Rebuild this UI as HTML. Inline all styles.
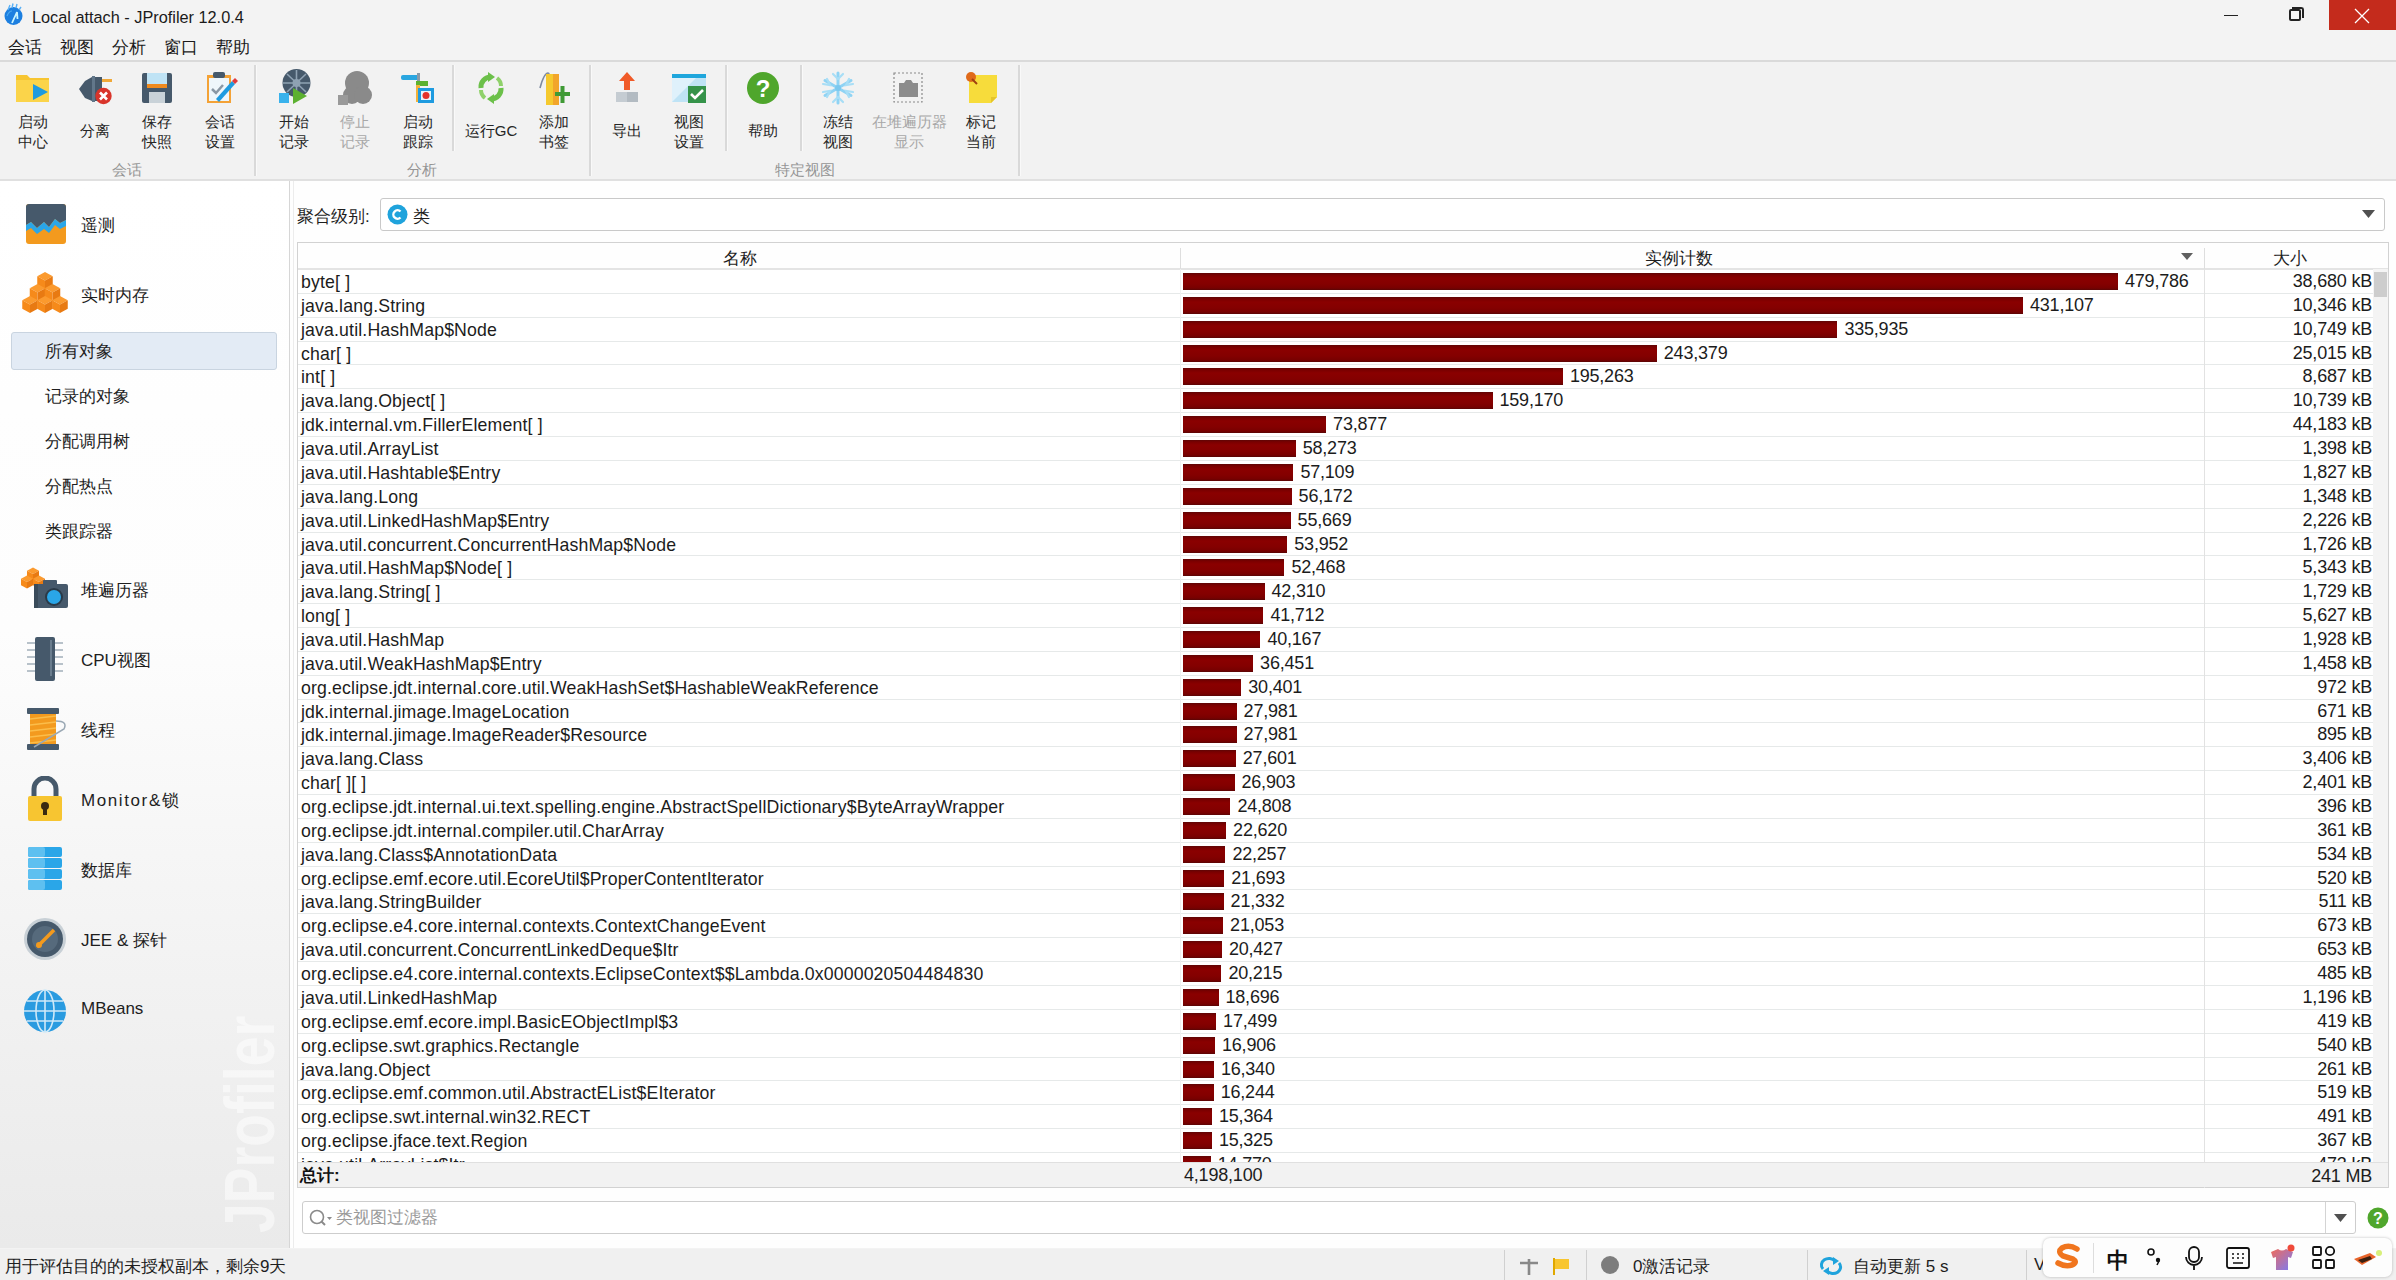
<!DOCTYPE html><html><head><meta charset='utf-8'><style>
*{margin:0;padding:0;box-sizing:border-box}
html,body{width:2396px;height:1280px;overflow:hidden;background:#f3f3f3}
body{position:relative;font-family:"Liberation Sans",sans-serif;color:#1a1a1a}
.a{position:absolute;white-space:nowrap}
.tb{font-size:15px;line-height:19.5px;text-align:center;color:#262626}
.tbd{color:#a8a8a8}
.glab{font-size:15px;color:#959595;text-align:center}
.si{font-size:17px;color:#1e1e1e}
.row{position:absolute;left:298px;width:2075px;height:24px;border-bottom:1px solid #e6e6e6}
.nm{position:absolute;left:3px;top:3px;font-size:17.7px;letter-spacing:0.15px;color:#1c1c1c}
.bar{position:absolute;height:17px;background:linear-gradient(#5e0606 0,#7a0000 2px,#8a0000 5px,#840000 11px,#780000 15px,#5a0505 17px)}
.cnt{position:absolute;font-size:18px;letter-spacing:-0.2px;color:#1c1c1c}
.sz{position:absolute;font-size:18px;letter-spacing:-0.2px;color:#1c1c1c;text-align:right}
</style></head><body>
<div class="a" style="left:0;top:0;width:2396px;height:30px;background:#f3f3f3"></div>
<svg class="a" style="left:2px;top:3px" width="24" height="26" viewBox="0 0 24 26"><circle cx="11.5" cy="13" r="9" fill="#1c7fe0"/><path d="M6 7 L8 2 M10 5 L11 0.5 M14 5 L15 1 M17 7 L19 4" stroke="#5ab0f5" stroke-width="1.4"/><path d="M10 20 L15 9 L15.5 16" stroke="#c8f4ff" stroke-width="1.8" fill="none"/><path d="M5 13 Q7 8 10 8" stroke="#4aa8f0" stroke-width="1.2" fill="none"/></svg>
<div class="a" style="left:32px;top:8px;font-size:16.3px;color:#1a1a1a">Local attach - JProfiler 12.0.4</div>
<div class="a" style="left:2224px;top:15px;width:14px;height:1px;background:#222"></div>
<div class="a" style="left:2289px;top:9px;width:12px;height:12px;border:2px solid #222;border-radius:2px"></div>
<div class="a" style="left:2292px;top:7px;width:12px;height:11px;border-top:2px solid #222;border-right:2px solid #222;border-radius:0 3px 0 0"></div>
<div class="a" style="left:2329px;top:0;width:67px;height:30px;background:#c42b1c"></div>
<svg class="a" style="left:2354px;top:8px" width="16" height="16" viewBox="0 0 16 16"><path d="M1 1 L15 15 M15 1 L1 15" stroke="#fff" stroke-width="1.3"/></svg>

<div class="a" style="left:8px;top:36px;font-size:17px;color:#1a1a1a">会话</div>
<div class="a" style="left:60px;top:36px;font-size:17px;color:#1a1a1a">视图</div>
<div class="a" style="left:112px;top:36px;font-size:17px;color:#1a1a1a">分析</div>
<div class="a" style="left:164px;top:36px;font-size:17px;color:#1a1a1a">窗口</div>
<div class="a" style="left:216px;top:36px;font-size:17px;color:#1a1a1a">帮助</div>
<div class="a" style="left:0;top:60px;width:2396px;height:2px;background:#dadada"></div>
<div class="a" style="left:0;top:62px;width:2396px;height:117px;background:#f2f2f2"></div>
<div class="a" style="left:0;top:179px;width:2396px;height:2px;background:#e0e0e0"></div>
<div class="a" style="left:254px;top:65px;width:2px;height:111px;background:#d9d9d9"></div><div class="a" style="left:256px;top:65px;width:1px;height:111px;background:#f9f9f9"></div>
<div class="a" style="left:452px;top:65px;width:2px;height:86px;background:#d9d9d9"></div><div class="a" style="left:454px;top:65px;width:1px;height:86px;background:#f9f9f9"></div>
<div class="a" style="left:589px;top:65px;width:2px;height:111px;background:#d9d9d9"></div><div class="a" style="left:591px;top:65px;width:1px;height:111px;background:#f9f9f9"></div>
<div class="a" style="left:725px;top:65px;width:2px;height:86px;background:#d9d9d9"></div><div class="a" style="left:727px;top:65px;width:1px;height:86px;background:#f9f9f9"></div>
<div class="a" style="left:800px;top:65px;width:2px;height:86px;background:#d9d9d9"></div><div class="a" style="left:802px;top:65px;width:1px;height:86px;background:#f9f9f9"></div>
<div class="a" style="left:1018px;top:65px;width:2px;height:111px;background:#d9d9d9"></div><div class="a" style="left:1020px;top:65px;width:1px;height:111px;background:#f9f9f9"></div>
<div class="a" style="left:15px;top:71px;width:36px;height:34px"><svg width="36" height="34" viewBox="0 0 36 34"><path d="M1 4 h11 l3 3 h19 v24 h-33z" fill="#f7c531"/><path d="M1 9 h33 v22 h-33z" fill="#fbd44a"/><path d="M18 13 L33 21 L18 29z" fill="#1e9be0"/></svg></div>
<div class="a tb" style="left:-17px;top:112px;width:100px">启动<br>中心</div>
<div class="a" style="left:77px;top:71px;width:36px;height:34px"><svg width="36" height="36" viewBox="0 0 36 36"><path d="M2 18 L8 10 L15 6 h10 v24 h-10 L8 27z" fill="#46596b"/><rect x="15" y="5" width="3" height="26" fill="#62778a"/><rect x="25" y="8" width="10" height="3" fill="#f0a838"/><circle cx="26.5" cy="25" r="8.2" fill="#d9342a"/><path d="M23 21.5 l7 7 M30 21.5 l-7 7" stroke="#fff" stroke-width="2.6"/></svg></div>
<div class="a tb" style="left:45px;top:121px;width:100px">分离</div>
<div class="a" style="left:139px;top:71px;width:36px;height:34px"><svg width="36" height="34" viewBox="0 0 36 34"><rect x="3" y="2" width="30" height="30" rx="2" fill="#46596b"/><rect x="8" y="2" width="20" height="11" fill="#bfe3f5"/><rect x="8" y="13" width="20" height="4" fill="#ef8a1e"/><rect x="10" y="21" width="16" height="11" fill="#c9d2d8"/></svg></div>
<div class="a tb" style="left:107px;top:112px;width:100px">保存<br>快照</div>
<div class="a" style="left:202px;top:71px;width:36px;height:34px"><svg width="36" height="34" viewBox="0 0 36 34"><rect x="5" y="4" width="24" height="28" fill="#f4a236"/><rect x="7" y="7" width="20" height="23" fill="#eef6fb"/><rect x="11" y="1" width="12" height="6" rx="2" fill="#46596b"/><path d="M10 18 l4 4 l7 -8" stroke="#8a98a5" stroke-width="2.5" fill="none"/><path d="M14 28 L30 10 L33 13 L17 31z" fill="#1e9be0"/><path d="M30 10 L33 7 L36 10 L33 13z" fill="#e23b3b"/></svg></div>
<div class="a tb" style="left:170px;top:112px;width:100px">会话<br>设置</div>
<div class="a" style="left:276px;top:71px;width:36px;height:34px"><svg width="36" height="36" viewBox="0 -2 36 36" style="position:absolute;top:-2px;left:0"><circle cx="20.5" cy="12" r="14" fill="#46596b"/><circle cx="20.5" cy="12" r="4" fill="#8fa2b3"/><path d="M20.5 -1 v26 M7 12 h27 M11 3 l19 18 M30 3 l-19 18" stroke="#8fa2b3" stroke-width="1.6"/><rect x="3" y="22" width="10" height="10" fill="#39b2ec"/><path d="M17 17 L31 25 L17 33z" fill="#5cb130"/></svg></div>
<div class="a tb" style="left:244px;top:112px;width:100px">开始<br>记录</div>
<div class="a" style="left:337px;top:71px;width:36px;height:34px"><svg width="36" height="36" viewBox="0 0 36 36"><circle cx="20" cy="12" r="12" fill="#8a8a8a"/><circle cx="15" cy="24" r="9" fill="#8a8a8a"/><circle cx="26" cy="24" r="9" fill="#8a8a8a"/><rect x="1" y="24" width="10" height="10" fill="#9a9a9a"/></svg></div>
<div class="a tb tbd" style="left:305px;top:112px;width:100px">停止<br>记录</div>
<div class="a" style="left:400px;top:71px;width:36px;height:34px"><svg width="36" height="34" viewBox="0 0 36 34"><rect x="1" y="4" width="18" height="5" rx="2" fill="#2aa6e0"/><rect x="17" y="2" width="3" height="10" fill="#8a9aa8"/><rect x="16" y="10" width="12" height="5" fill="#5cb130"/><rect x="16" y="14" width="4" height="17" fill="#f2b23a"/><rect x="18" y="17" width="16" height="15" fill="#1e9be0"/><rect x="21" y="20" width="10" height="9" fill="#e8f4fb"/><circle cx="26" cy="24.5" r="3.5" fill="#e2322a"/></svg></div>
<div class="a tb" style="left:368px;top:112px;width:100px">启动<br>跟踪</div>
<div class="a" style="left:473px;top:71px;width:36px;height:34px"><svg width="36" height="34" viewBox="0 0 36 34"><path d="M8 17 A10 10 0 0 1 18 6" stroke="#6cc04a" stroke-width="5" fill="none"/><path d="M15 1 L22 6 L15 11z" fill="#6cc04a"/><path d="M28 17 A10 10 0 0 1 18 28" stroke="#6cc04a" stroke-width="5" fill="none"/><path d="M21 23 L14 28 L21 33z" fill="#6cc04a"/><path d="M12 27 A10 10 0 0 1 8 19" stroke="#8fd16a" stroke-width="4" fill="none"/><path d="M24 7 A10 10 0 0 1 28 15" stroke="#8fd16a" stroke-width="4" fill="none"/></svg></div>
<div class="a tb" style="left:441px;top:121px;width:100px">运行GC</div>
<div class="a" style="left:536px;top:71px;width:36px;height:34px"><svg width="36" height="36" viewBox="0 0 36 36"><path d="M4 17 Q8 2 12 2 Q14 2 14 10" stroke="#7d8aa0" stroke-width="1.6" fill="none"/><path d="M10 3 h13 v31 h-13z" fill="#f5c92e"/><path d="M17 3 h6 v31 h-6z" fill="#f2a52a"/><rect x="19" y="21" width="15" height="4" fill="#3f9a35"/><rect x="24.5" y="15" width="4" height="17" fill="#3f9a35"/></svg></div>
<div class="a tb" style="left:504px;top:112px;width:100px">添加<br>书签</div>
<div class="a" style="left:609px;top:71px;width:36px;height:34px"><svg width="36" height="34" viewBox="0 0 36 34"><path d="M18 1 L26 10 L21 10 L21 19 L15 19 L15 10 L10 10z" fill="#f05a28"/><rect x="7" y="21" width="22" height="10" fill="#c5ccd2"/><rect x="18" y="21" width="11" height="10" fill="#b3bbc2"/></svg></div>
<div class="a tb" style="left:577px;top:121px;width:100px">导出</div>
<div class="a" style="left:671px;top:71px;width:36px;height:34px"><svg width="36" height="34" viewBox="0 0 36 34"><rect x="1" y="3" width="34" height="28" fill="#dff1fb"/><path d="M1 31 L25 7 L35 7 L35 31z" fill="#bfe3f5"/><rect x="1" y="3" width="34" height="4" fill="#1fa6dc"/><rect x="17" y="15" width="18" height="17" fill="#35934a"/><path d="M20 23 l4 4 l8 -8" stroke="#fff" stroke-width="2.6" fill="none"/></svg></div>
<div class="a tb" style="left:639px;top:112px;width:100px">视图<br>设置</div>
<div class="a" style="left:745px;top:71px;width:36px;height:34px"><svg width="36" height="34" viewBox="0 0 36 34"><circle cx="18" cy="17" r="16" fill="#4fa62c"/><text x="18" y="26" text-anchor="middle" font-family="Liberation Sans" font-weight="bold" font-size="24" fill="#fff">?</text></svg></div>
<div class="a tb" style="left:713px;top:121px;width:100px">帮助</div>
<div class="a" style="left:820px;top:71px;width:36px;height:34px"><svg width="36" height="34" viewBox="0 0 36 34"><g stroke="#8fd3f4" stroke-width="3" stroke-linecap="round"><path d="M18 2 v30 M5 9.5 l26 15 M31 9.5 l-26 15"/></g><g stroke="#a8def6" stroke-width="2.2" fill="none" stroke-linecap="round"><path d="M13 3 l5 5 l5 -5 M13 31 l5 -5 l5 5 M3 13 l7 1 l-3 -6 M33 13 l-7 1 l3 -6 M3 21 l7 -1 l-3 6 M33 21 l-7 -1 l3 6"/></g><circle cx="18" cy="17" r="3" fill="#7cc8ee"/></svg></div>
<div class="a tb" style="left:788px;top:112px;width:100px">冻结<br>视图</div>
<div class="a" style="left:891px;top:71px;width:36px;height:34px"><svg width="36" height="34" viewBox="0 0 36 34"><rect x="3" y="2" width="28" height="29" fill="none" stroke="#8a8a8a" stroke-width="1.2" stroke-dasharray="2 2"/><path d="M8 12 h5 l2 -3 h5 l2 3 h5 v14 h-19z" fill="#8c8c8c"/></svg></div>
<div class="a tb tbd" style="left:859px;top:112px;width:100px">在堆遍历器<br>显示</div>
<div class="a" style="left:963px;top:71px;width:36px;height:34px"><svg width="36" height="34" viewBox="0 0 36 34"><path d="M6 4 h28 v22 l-6 6 h-22z" fill="#f7dc3b"/><path d="M28 32 l6 -6 h-6z" fill="#e5c52a"/><circle cx="8" cy="6" r="5" fill="#e06a1a"/><path d="M9 8 l5 5" stroke="#a04010" stroke-width="2"/></svg></div>
<div class="a tb" style="left:931px;top:112px;width:100px">标记<br>当前</div>
<div class="a glab" style="left:77px;top:160.5px;width:100px">会话</div>
<div class="a glab" style="left:372px;top:160.5px;width:100px">分析</div>
<div class="a glab" style="left:755px;top:160.5px;width:100px">特定视图</div>
<div class="a" style="left:0;top:181px;width:289px;height:1067px;background:linear-gradient(#ffffff 0,#fdfdfd 450px,#f2f2f2 800px,#eaeaea 1067px)"></div>
<div class="a" style="left:289px;top:181px;width:1px;height:1067px;background:#d6d6d6"></div>
<div class="a" style="left:215px;top:1233px;line-height:70px;transform-origin:0 0;transform:rotate(-90deg) scaleX(0.765);font-size:70px;font-weight:bold;color:rgba(255,255,255,0.5)">JProfiler</div>
<div class="a" style="left:25px;top:203px"><svg width="42" height="42" viewBox="0 0 42 42"><rect x="1" y="1" width="40" height="40" rx="3" fill="#f39a1e"/><path d="M1 4 Q1 1 4 1 h34 Q41 1 41 4 v13 L35 20 L30 16 L24 24 L19 19 L12 25 L6 19 L1 22z" fill="#46596b"/><path d="M1 22 L6 19 L12 25 L19 19 L24 24 L30 16 L35 20 L41 17 v6 L35 26 L30 22 L24 30 L19 26 L12 31 L6 25 L1 28z" fill="#2aa6e8"/></svg></div>
<div class="a si" style="left:81px;top:214px">遥测</div>
<div class="a" style="left:22px;top:272px"><svg width="46" height="42" viewBox="0 0 46 42"><path d="M23,0.0 L30.75,4.25 L23,8.5 L15.25,4.25z" fill="#fb9a2e"/><path d="M15.25,4.25 L23,8.5 L23,17.0 L15.25,12.75z" fill="#f68a1a"/><path d="M30.75,4.25 L23,8.5 L23,17.0 L30.75,12.75z" fill="#e87a12"/><path d="M15.5,12.0 L23.25,16.25 L15.5,20.5 L7.75,16.25z" fill="#fb9a2e"/><path d="M7.75,16.25 L15.5,20.5 L15.5,29.0 L7.75,24.75z" fill="#f68a1a"/><path d="M23.25,16.25 L15.5,20.5 L15.5,29.0 L23.25,24.75z" fill="#e87a12"/><path d="M30.5,12.0 L38.25,16.25 L30.5,20.5 L22.75,16.25z" fill="#fb9a2e"/><path d="M22.75,16.25 L30.5,20.5 L30.5,29.0 L22.75,24.75z" fill="#f68a1a"/><path d="M38.25,16.25 L30.5,20.5 L30.5,29.0 L38.25,24.75z" fill="#e87a12"/><path d="M8,24.0 L15.75,28.25 L8,32.5 L0.25,28.25z" fill="#fb9a2e"/><path d="M0.25,28.25 L8,32.5 L8,41.0 L0.25,36.75z" fill="#f68a1a"/><path d="M15.75,28.25 L8,32.5 L8,41.0 L15.75,36.75z" fill="#e87a12"/><path d="M23,24.0 L30.75,28.25 L23,32.5 L15.25,28.25z" fill="#fb9a2e"/><path d="M15.25,28.25 L23,32.5 L23,41.0 L15.25,36.75z" fill="#f68a1a"/><path d="M30.75,28.25 L23,32.5 L23,41.0 L30.75,36.75z" fill="#e87a12"/><path d="M38,24.0 L45.75,28.25 L38,32.5 L30.25,28.25z" fill="#fb9a2e"/><path d="M30.25,28.25 L38,32.5 L38,41.0 L30.25,36.75z" fill="#f68a1a"/><path d="M45.75,28.25 L38,32.5 L38,41.0 L45.75,36.75z" fill="#e87a12"/></svg></div>
<div class="a si" style="left:81px;top:284px">实时内存</div>
<div class="a" style="left:21px;top:566px"><svg width="48" height="46" viewBox="0 0 48 46"><path d="M12,1.5 L18.0,4.75 L12,8 L6.0,4.75z" fill="#fb9a2e"/><path d="M6.0,4.75 L12,8 L12,14.5 L6.0,11.25z" fill="#f68a1a"/><path d="M18.0,4.75 L12,8 L12,14.5 L18.0,11.25z" fill="#e87a12"/><path d="M6,9.5 L12.0,12.75 L6,16 L0.0,12.75z" fill="#fb9a2e"/><path d="M0.0,12.75 L6,16 L6,22.5 L0.0,19.25z" fill="#f68a1a"/><path d="M12.0,12.75 L6,16 L6,22.5 L12.0,19.25z" fill="#e87a12"/><path d="M18,9.5 L24.0,12.75 L18,16 L12.0,12.75z" fill="#fb9a2e"/><path d="M12.0,12.75 L18,16 L18,22.5 L12.0,19.25z" fill="#f68a1a"/><path d="M24.0,12.75 L18,16 L18,22.5 L24.0,19.25z" fill="#e87a12"/><rect x="13" y="18" width="34" height="24" rx="2" fill="#46596b"/><rect x="22" y="14" width="14" height="6" rx="1" fill="#46596b"/><circle cx="33" cy="31" r="9" fill="#2a3a48"/><circle cx="33" cy="31" r="7" fill="#2aa6e8"/><rect x="13" y="18" width="4" height="24" fill="#3a4b5a"/></svg></div>
<div class="a si" style="left:81px;top:579px">堆遍历器</div>
<div class="a" style="left:24px;top:636px"><svg width="42" height="46" viewBox="0 0 42 46"><g fill="#b8c2ca"><rect x="3" y="6" width="36" height="2"/><rect x="3" y="13" width="36" height="2"/><rect x="3" y="20" width="36" height="2"/><rect x="3" y="27" width="36" height="2"/><rect x="3" y="34" width="36" height="2"/></g><rect x="11" y="1" width="20" height="44" rx="2" fill="#46596b"/><path d="M27 4 v36" stroke="#6a7d8e" stroke-width="2"/></svg></div>
<div class="a si" style="left:81px;top:649px">CPU视图</div>
<div class="a" style="left:24px;top:707px"><svg width="46" height="44" viewBox="0 0 46 44"><rect x="3" y="1" width="32" height="6" rx="1" fill="#46596b"/><rect x="3" y="37" width="32" height="6" rx="1" fill="#46596b"/><rect x="6" y="7" width="26" height="30" fill="#f39a1e"/><g stroke="#fbbd4a" stroke-width="1.5"><path d="M6 12 l26 -3 M6 18 l26 -3 M6 24 l26 -3 M6 30 l26 -3 M6 36 l26 -3"/></g><path d="M32 14 Q44 14 40 22 L10 40" stroke="#9aa8b4" stroke-width="1.5" fill="none"/></svg></div>
<div class="a si" style="left:81px;top:719px">线程</div>
<div class="a" style="left:25px;top:776px"><svg width="40" height="46" viewBox="0 0 40 46"><path d="M9 22 V13 A11 11 0 0 1 31 13 V22" stroke="#46596b" stroke-width="5" fill="none"/><rect x="3" y="20" width="34" height="25" rx="2" fill="#f7c531"/><circle cx="20" cy="30" r="4" fill="#3a2a10"/><rect x="18" y="31" width="4" height="8" fill="#3a2a10"/></svg></div>
<div class="a si" style="left:81px;top:789px"><span style="letter-spacing:1.6px">Monitor&amp;</span>锁</div>
<div class="a" style="left:25px;top:846px"><svg width="40" height="46" viewBox="0 0 40 46"><g fill="#2aa6e8"><rect x="3" y="1" width="34" height="10" rx="2"/><rect x="3" y="12" width="34" height="10" rx="2"/><rect x="3" y="23" width="34" height="10" rx="2"/><rect x="3" y="34" width="34" height="10" rx="2"/></g><g fill="#5ec0f0"><rect x="3" y="1" width="17" height="10" rx="2"/><rect x="3" y="12" width="17" height="10" rx="2"/><rect x="3" y="23" width="17" height="10" rx="2"/><rect x="3" y="34" width="17" height="10" rx="2"/></g></svg></div>
<div class="a si" style="left:81px;top:859px">数据库</div>
<div class="a" style="left:23px;top:917px"><svg width="44" height="44" viewBox="0 0 44 44"><circle cx="22" cy="22" r="21" fill="#c8d0d6"/><circle cx="22" cy="22" r="18" fill="#46596b"/><circle cx="22" cy="22" r="13" fill="#566a7c"/><path d="M14 30 L31 13" stroke="#f39a1e" stroke-width="3.5"/><circle cx="16" cy="28" r="3" fill="#f39a1e"/></svg></div>
<div class="a si" style="left:81px;top:929px">JEE &amp; 探针</div>
<div class="a" style="left:23px;top:989px"><svg width="44" height="44" viewBox="0 0 44 44"><circle cx="22" cy="22" r="21" fill="#2a9be0"/><g stroke="#cfe9f8" stroke-width="1.6" fill="none"><ellipse cx="22" cy="22" rx="9" ry="21"/><path d="M22 1 v42 M1 22 h42 M4 12 h36 M4 32 h36"/></g></svg></div>
<div class="a si" style="left:81px;top:999px">MBeans</div>
<div class="a" style="left:11px;top:332px;width:266px;height:38px;background:#e3ebf5;border:1px solid #c9d4e0;border-radius:3px"></div>
<div class="a si" style="left:45px;top:340px">所有对象</div>
<div class="a si" style="left:45px;top:385px">记录的对象</div>
<div class="a si" style="left:45px;top:430px">分配调用树</div>
<div class="a si" style="left:45px;top:475px">分配热点</div>
<div class="a si" style="left:45px;top:520px">类跟踪器</div>
<div class="a" style="left:290px;top:181px;width:2106px;height:1067px;background:#fefefe"></div>
<div class="a si" style="left:297px;top:204.5px">聚合级别:</div>
<div class="a" style="left:293px;top:181px;width:1px;height:1067px;background:#ececec"></div>
<div class="a" style="left:380px;top:198px;width:2005px;height:33px;border:1px solid #c9c9c9;border-radius:3px;background:#fff"></div>
<svg class="a" style="left:387px;top:204px" width="21" height="21" viewBox="0 0 21 21"><circle cx="10.5" cy="10.5" r="10" fill="#1fa3dc"/><path d="M13.5 7.5 A4.2 4.2 0 1 0 13.5 13.5" stroke="#fff" stroke-width="2.4" fill="none"/></svg>
<div class="a si" style="left:413px;top:204.5px">类</div>
<svg class="a" style="left:2362px;top:210px" width="13" height="8" viewBox="0 0 13 8"><path d="M0 0 H13 L6.5 8z" fill="#505050"/></svg>
<div class="a" style="left:297px;top:242px;width:2092px;height:946px;border:1px solid #d2d2d2;background:#fff"></div>
<div class="a" style="left:298px;top:243px;width:2090px;height:27px;background:#fefefe;border-bottom:2px solid #e4e4e4"></div>
<div class="a" style="left:1180px;top:248px;width:1px;height:21px;background:#dedede"></div>
<div class="a" style="left:2204px;top:248px;width:1px;height:21px;background:#dedede"></div>
<div class="a si" style="left:723px;top:246.5px">名称</div>
<div class="a si" style="left:1645px;top:246.5px">实例计数</div>
<div class="a si" style="left:2273px;top:246.5px">大小</div>
<svg class="a" style="left:2181px;top:253px" width="12" height="7" viewBox="0 0 12 7"><path d="M0 0 H12 L6 7z" fill="#606060"/></svg>
<div class="a" style="left:298px;top:269px;width:2075px;height:893px;overflow:hidden">
<div class="a" style="left:0;top:24px;width:2075px;height:1px;background:#e6e9e9"></div>
<div class="a" style="left:0;top:0.00px;width:2075px;height:23.864px"><div class="nm">byte[ ]</div><div class="bar" style="left:885px;top:4px;width:935.0px"></div><div class="cnt" style="left:1827.0px;top:2px">479,786</div><div class="sz" style="left:1909px;width:165px;top:2px">38,680 kB</div></div>
<div class="a" style="left:0;top:48px;width:2075px;height:1px;background:#e6e9e9"></div>
<div class="a" style="left:0;top:23.86px;width:2075px;height:23.864px"><div class="nm">java.lang.String</div><div class="bar" style="left:885px;top:4px;width:840.0px"></div><div class="cnt" style="left:1732.0px;top:2px">431,107</div><div class="sz" style="left:1909px;width:165px;top:2px">10,346 kB</div></div>
<div class="a" style="left:0;top:72px;width:2075px;height:1px;background:#e6e9e9"></div>
<div class="a" style="left:0;top:47.73px;width:2075px;height:23.864px"><div class="nm">java.util.HashMap$Node</div><div class="bar" style="left:885px;top:4px;width:654.4px"></div><div class="cnt" style="left:1546.4px;top:2px">335,935</div><div class="sz" style="left:1909px;width:165px;top:2px">10,749 kB</div></div>
<div class="a" style="left:0;top:95px;width:2075px;height:1px;background:#e6e9e9"></div>
<div class="a" style="left:0;top:71.59px;width:2075px;height:23.864px"><div class="nm">char[ ]</div><div class="bar" style="left:885px;top:4px;width:473.8px"></div><div class="cnt" style="left:1365.8px;top:2px">243,379</div><div class="sz" style="left:1909px;width:165px;top:2px">25,015 kB</div></div>
<div class="a" style="left:0;top:119px;width:2075px;height:1px;background:#e6e9e9"></div>
<div class="a" style="left:0;top:95.46px;width:2075px;height:23.864px"><div class="nm">int[ ]</div><div class="bar" style="left:885px;top:4px;width:379.9px"></div><div class="cnt" style="left:1271.9px;top:2px">195,263</div><div class="sz" style="left:1909px;width:165px;top:2px">8,687 kB</div></div>
<div class="a" style="left:0;top:143px;width:2075px;height:1px;background:#e6e9e9"></div>
<div class="a" style="left:0;top:119.32px;width:2075px;height:23.864px"><div class="nm">java.lang.Object[ ]</div><div class="bar" style="left:885px;top:4px;width:309.5px"></div><div class="cnt" style="left:1201.5px;top:2px">159,170</div><div class="sz" style="left:1909px;width:165px;top:2px">10,739 kB</div></div>
<div class="a" style="left:0;top:167px;width:2075px;height:1px;background:#e6e9e9"></div>
<div class="a" style="left:0;top:143.18px;width:2075px;height:23.864px"><div class="nm">jdk.internal.vm.FillerElement[ ]</div><div class="bar" style="left:885px;top:4px;width:143.1px"></div><div class="cnt" style="left:1035.1px;top:2px">73,877</div><div class="sz" style="left:1909px;width:165px;top:2px">44,183 kB</div></div>
<div class="a" style="left:0;top:191px;width:2075px;height:1px;background:#e6e9e9"></div>
<div class="a" style="left:0;top:167.05px;width:2075px;height:23.864px"><div class="nm">java.util.ArrayList</div><div class="bar" style="left:885px;top:4px;width:112.7px"></div><div class="cnt" style="left:1004.7px;top:2px">58,273</div><div class="sz" style="left:1909px;width:165px;top:2px">1,398 kB</div></div>
<div class="a" style="left:0;top:215px;width:2075px;height:1px;background:#e6e9e9"></div>
<div class="a" style="left:0;top:190.91px;width:2075px;height:23.864px"><div class="nm">java.util.Hashtable$Entry</div><div class="bar" style="left:885px;top:4px;width:110.4px"></div><div class="cnt" style="left:1002.4px;top:2px">57,109</div><div class="sz" style="left:1909px;width:165px;top:2px">1,827 kB</div></div>
<div class="a" style="left:0;top:239px;width:2075px;height:1px;background:#e6e9e9"></div>
<div class="a" style="left:0;top:214.78px;width:2075px;height:23.864px"><div class="nm">java.lang.Long</div><div class="bar" style="left:885px;top:4px;width:108.6px"></div><div class="cnt" style="left:1000.6px;top:2px">56,172</div><div class="sz" style="left:1909px;width:165px;top:2px">1,348 kB</div></div>
<div class="a" style="left:0;top:263px;width:2075px;height:1px;background:#e6e9e9"></div>
<div class="a" style="left:0;top:238.64px;width:2075px;height:23.864px"><div class="nm">java.util.LinkedHashMap$Entry</div><div class="bar" style="left:885px;top:4px;width:107.6px"></div><div class="cnt" style="left:999.6px;top:2px">55,669</div><div class="sz" style="left:1909px;width:165px;top:2px">2,226 kB</div></div>
<div class="a" style="left:0;top:286px;width:2075px;height:1px;background:#e6e9e9"></div>
<div class="a" style="left:0;top:262.50px;width:2075px;height:23.864px"><div class="nm">java.util.concurrent.ConcurrentHashMap$Node</div><div class="bar" style="left:885px;top:4px;width:104.3px"></div><div class="cnt" style="left:996.3px;top:2px">53,952</div><div class="sz" style="left:1909px;width:165px;top:2px">1,726 kB</div></div>
<div class="a" style="left:0;top:310px;width:2075px;height:1px;background:#e6e9e9"></div>
<div class="a" style="left:0;top:286.37px;width:2075px;height:23.864px"><div class="nm">java.util.HashMap$Node[ ]</div><div class="bar" style="left:885px;top:4px;width:101.4px"></div><div class="cnt" style="left:993.4px;top:2px">52,468</div><div class="sz" style="left:1909px;width:165px;top:2px">5,343 kB</div></div>
<div class="a" style="left:0;top:334px;width:2075px;height:1px;background:#e6e9e9"></div>
<div class="a" style="left:0;top:310.23px;width:2075px;height:23.864px"><div class="nm">java.lang.String[ ]</div><div class="bar" style="left:885px;top:4px;width:81.5px"></div><div class="cnt" style="left:973.5px;top:2px">42,310</div><div class="sz" style="left:1909px;width:165px;top:2px">1,729 kB</div></div>
<div class="a" style="left:0;top:358px;width:2075px;height:1px;background:#e6e9e9"></div>
<div class="a" style="left:0;top:334.10px;width:2075px;height:23.864px"><div class="nm">long[ ]</div><div class="bar" style="left:885px;top:4px;width:80.4px"></div><div class="cnt" style="left:972.4px;top:2px">41,712</div><div class="sz" style="left:1909px;width:165px;top:2px">5,627 kB</div></div>
<div class="a" style="left:0;top:382px;width:2075px;height:1px;background:#e6e9e9"></div>
<div class="a" style="left:0;top:357.96px;width:2075px;height:23.864px"><div class="nm">java.util.HashMap</div><div class="bar" style="left:885px;top:4px;width:77.4px"></div><div class="cnt" style="left:969.4px;top:2px">40,167</div><div class="sz" style="left:1909px;width:165px;top:2px">1,928 kB</div></div>
<div class="a" style="left:0;top:406px;width:2075px;height:1px;background:#e6e9e9"></div>
<div class="a" style="left:0;top:381.82px;width:2075px;height:23.864px"><div class="nm">java.util.WeakHashMap$Entry</div><div class="bar" style="left:885px;top:4px;width:70.1px"></div><div class="cnt" style="left:962.1px;top:2px">36,451</div><div class="sz" style="left:1909px;width:165px;top:2px">1,458 kB</div></div>
<div class="a" style="left:0;top:430px;width:2075px;height:1px;background:#e6e9e9"></div>
<div class="a" style="left:0;top:405.69px;width:2075px;height:23.864px"><div class="nm">org.eclipse.jdt.internal.core.util.WeakHashSet$HashableWeakReference</div><div class="bar" style="left:885px;top:4px;width:58.3px"></div><div class="cnt" style="left:950.3px;top:2px">30,401</div><div class="sz" style="left:1909px;width:165px;top:2px">972 kB</div></div>
<div class="a" style="left:0;top:453px;width:2075px;height:1px;background:#e6e9e9"></div>
<div class="a" style="left:0;top:429.55px;width:2075px;height:23.864px"><div class="nm">jdk.internal.jimage.ImageLocation</div><div class="bar" style="left:885px;top:4px;width:53.6px"></div><div class="cnt" style="left:945.6px;top:2px">27,981</div><div class="sz" style="left:1909px;width:165px;top:2px">671 kB</div></div>
<div class="a" style="left:0;top:477px;width:2075px;height:1px;background:#e6e9e9"></div>
<div class="a" style="left:0;top:453.42px;width:2075px;height:23.864px"><div class="nm">jdk.internal.jimage.ImageReader$Resource</div><div class="bar" style="left:885px;top:4px;width:53.6px"></div><div class="cnt" style="left:945.6px;top:2px">27,981</div><div class="sz" style="left:1909px;width:165px;top:2px">895 kB</div></div>
<div class="a" style="left:0;top:501px;width:2075px;height:1px;background:#e6e9e9"></div>
<div class="a" style="left:0;top:477.28px;width:2075px;height:23.864px"><div class="nm">java.lang.Class</div><div class="bar" style="left:885px;top:4px;width:52.8px"></div><div class="cnt" style="left:944.8px;top:2px">27,601</div><div class="sz" style="left:1909px;width:165px;top:2px">3,406 kB</div></div>
<div class="a" style="left:0;top:525px;width:2075px;height:1px;background:#e6e9e9"></div>
<div class="a" style="left:0;top:501.14px;width:2075px;height:23.864px"><div class="nm">char[ ][ ]</div><div class="bar" style="left:885px;top:4px;width:51.5px"></div><div class="cnt" style="left:943.5px;top:2px">26,903</div><div class="sz" style="left:1909px;width:165px;top:2px">2,401 kB</div></div>
<div class="a" style="left:0;top:549px;width:2075px;height:1px;background:#e6e9e9"></div>
<div class="a" style="left:0;top:525.01px;width:2075px;height:23.864px"><div class="nm">org.eclipse.jdt.internal.ui.text.spelling.engine.AbstractSpellDictionary$ByteArrayWrapper</div><div class="bar" style="left:885px;top:4px;width:47.4px"></div><div class="cnt" style="left:939.4px;top:2px">24,808</div><div class="sz" style="left:1909px;width:165px;top:2px">396 kB</div></div>
<div class="a" style="left:0;top:573px;width:2075px;height:1px;background:#e6e9e9"></div>
<div class="a" style="left:0;top:548.87px;width:2075px;height:23.864px"><div class="nm">org.eclipse.jdt.internal.compiler.util.CharArray</div><div class="bar" style="left:885px;top:4px;width:43.1px"></div><div class="cnt" style="left:935.1px;top:2px">22,620</div><div class="sz" style="left:1909px;width:165px;top:2px">361 kB</div></div>
<div class="a" style="left:0;top:597px;width:2075px;height:1px;background:#e6e9e9"></div>
<div class="a" style="left:0;top:572.74px;width:2075px;height:23.864px"><div class="nm">java.lang.Class$AnnotationData</div><div class="bar" style="left:885px;top:4px;width:42.4px"></div><div class="cnt" style="left:934.4px;top:2px">22,257</div><div class="sz" style="left:1909px;width:165px;top:2px">534 kB</div></div>
<div class="a" style="left:0;top:620px;width:2075px;height:1px;background:#e6e9e9"></div>
<div class="a" style="left:0;top:596.60px;width:2075px;height:23.864px"><div class="nm">org.eclipse.emf.ecore.util.EcoreUtil$ProperContentIterator</div><div class="bar" style="left:885px;top:4px;width:41.3px"></div><div class="cnt" style="left:933.3px;top:2px">21,693</div><div class="sz" style="left:1909px;width:165px;top:2px">520 kB</div></div>
<div class="a" style="left:0;top:644px;width:2075px;height:1px;background:#e6e9e9"></div>
<div class="a" style="left:0;top:620.46px;width:2075px;height:23.864px"><div class="nm">java.lang.StringBuilder</div><div class="bar" style="left:885px;top:4px;width:40.6px"></div><div class="cnt" style="left:932.6px;top:2px">21,332</div><div class="sz" style="left:1909px;width:165px;top:2px">511 kB</div></div>
<div class="a" style="left:0;top:668px;width:2075px;height:1px;background:#e6e9e9"></div>
<div class="a" style="left:0;top:644.33px;width:2075px;height:23.864px"><div class="nm">org.eclipse.e4.core.internal.contexts.ContextChangeEvent</div><div class="bar" style="left:885px;top:4px;width:40.1px"></div><div class="cnt" style="left:932.1px;top:2px">21,053</div><div class="sz" style="left:1909px;width:165px;top:2px">673 kB</div></div>
<div class="a" style="left:0;top:692px;width:2075px;height:1px;background:#e6e9e9"></div>
<div class="a" style="left:0;top:668.19px;width:2075px;height:23.864px"><div class="nm">java.util.concurrent.ConcurrentLinkedDeque$Itr</div><div class="bar" style="left:885px;top:4px;width:38.9px"></div><div class="cnt" style="left:930.9px;top:2px">20,427</div><div class="sz" style="left:1909px;width:165px;top:2px">653 kB</div></div>
<div class="a" style="left:0;top:716px;width:2075px;height:1px;background:#e6e9e9"></div>
<div class="a" style="left:0;top:692.06px;width:2075px;height:23.864px"><div class="nm">org.eclipse.e4.core.internal.contexts.EclipseContext$$Lambda.0x0000020504484830</div><div class="bar" style="left:885px;top:4px;width:38.4px"></div><div class="cnt" style="left:930.4px;top:2px">20,215</div><div class="sz" style="left:1909px;width:165px;top:2px">485 kB</div></div>
<div class="a" style="left:0;top:740px;width:2075px;height:1px;background:#e6e9e9"></div>
<div class="a" style="left:0;top:715.92px;width:2075px;height:23.864px"><div class="nm">java.util.LinkedHashMap</div><div class="bar" style="left:885px;top:4px;width:35.5px"></div><div class="cnt" style="left:927.5px;top:2px">18,696</div><div class="sz" style="left:1909px;width:165px;top:2px">1,196 kB</div></div>
<div class="a" style="left:0;top:764px;width:2075px;height:1px;background:#e6e9e9"></div>
<div class="a" style="left:0;top:739.78px;width:2075px;height:23.864px"><div class="nm">org.eclipse.emf.ecore.impl.BasicEObjectImpl$3</div><div class="bar" style="left:885px;top:4px;width:33.1px"></div><div class="cnt" style="left:925.1px;top:2px">17,499</div><div class="sz" style="left:1909px;width:165px;top:2px">419 kB</div></div>
<div class="a" style="left:0;top:788px;width:2075px;height:1px;background:#e6e9e9"></div>
<div class="a" style="left:0;top:763.65px;width:2075px;height:23.864px"><div class="nm">org.eclipse.swt.graphics.Rectangle</div><div class="bar" style="left:885px;top:4px;width:32.0px"></div><div class="cnt" style="left:924.0px;top:2px">16,906</div><div class="sz" style="left:1909px;width:165px;top:2px">540 kB</div></div>
<div class="a" style="left:0;top:811px;width:2075px;height:1px;background:#e6e9e9"></div>
<div class="a" style="left:0;top:787.51px;width:2075px;height:23.864px"><div class="nm">java.lang.Object</div><div class="bar" style="left:885px;top:4px;width:30.9px"></div><div class="cnt" style="left:922.9px;top:2px">16,340</div><div class="sz" style="left:1909px;width:165px;top:2px">261 kB</div></div>
<div class="a" style="left:0;top:835px;width:2075px;height:1px;background:#e6e9e9"></div>
<div class="a" style="left:0;top:811.38px;width:2075px;height:23.864px"><div class="nm">org.eclipse.emf.common.util.AbstractEList$EIterator</div><div class="bar" style="left:885px;top:4px;width:30.7px"></div><div class="cnt" style="left:922.7px;top:2px">16,244</div><div class="sz" style="left:1909px;width:165px;top:2px">519 kB</div></div>
<div class="a" style="left:0;top:859px;width:2075px;height:1px;background:#e6e9e9"></div>
<div class="a" style="left:0;top:835.24px;width:2075px;height:23.864px"><div class="nm">org.eclipse.swt.internal.win32.RECT</div><div class="bar" style="left:885px;top:4px;width:29.0px"></div><div class="cnt" style="left:921.0px;top:2px">15,364</div><div class="sz" style="left:1909px;width:165px;top:2px">491 kB</div></div>
<div class="a" style="left:0;top:883px;width:2075px;height:1px;background:#e6e9e9"></div>
<div class="a" style="left:0;top:859.10px;width:2075px;height:23.864px"><div class="nm">org.eclipse.jface.text.Region</div><div class="bar" style="left:885px;top:4px;width:28.9px"></div><div class="cnt" style="left:920.9px;top:2px">15,325</div><div class="sz" style="left:1909px;width:165px;top:2px">367 kB</div></div>
<div class="a" style="left:0;top:907px;width:2075px;height:1px;background:#e6e9e9"></div>
<div class="a" style="left:0;top:882.97px;width:2075px;height:23.864px"><div class="nm">java.util.ArrayList$Itr</div><div class="bar" style="left:885px;top:4px;width:27.8px"></div><div class="cnt" style="left:919.8px;top:2px">14,770</div><div class="sz" style="left:1909px;width:165px;top:2px">473 kB</div></div>
</div>
<div class="a" style="left:1180px;top:269px;width:1px;height:893px;background:#f1f1f1"></div>
<div class="a" style="left:2204px;top:269px;width:1px;height:919px;background:#e2e2e2"></div>
<div class="a" style="left:2373px;top:269px;width:15px;height:893px;background:#f4f4f4"></div>
<div class="a" style="left:2374px;top:272px;width:13px;height:25px;background:#cdcdcd"></div>
<div class="a" style="left:298px;top:1162px;width:2090px;height:25px;background:#f2f2f2;border-top:1px solid #e0e0e0"></div>
<div class="a" style="left:300px;top:1164px;font-size:17px;font-weight:bold;color:#111">总计:</div>
<div class="a cnt" style="left:1184px;top:1165px">4,198,100</div>
<div class="a sz" style="left:2207px;width:165px;top:1165.5px">241 MB</div>
<div class="a" style="left:302px;top:1201px;width:2054px;height:33px;border:1px solid #cdcdcd;border-radius:3px;background:#fff"></div>
<div class="a" style="left:2325px;top:1202px;width:1px;height:31px;background:#d4d4d4"></div>
<svg class="a" style="left:2334px;top:1214px" width="13" height="8" viewBox="0 0 13 8"><path d="M0 0 H13 L6.5 8z" fill="#505050"/></svg>
<svg class="a" style="left:308px;top:1207px" width="26" height="22" viewBox="0 0 26 22"><circle cx="9" cy="10" r="6.5" stroke="#8a8a8a" stroke-width="1.6" fill="none"/><path d="M13.5 14.5 L17 18" stroke="#8a8a8a" stroke-width="2"/><path d="M19 10 h5 l-2.5 3z" fill="#8a8a8a"/></svg>
<div class="a si" style="left:336px;top:1206px;color:#9a9a9a">类视图过滤器</div>
<svg class="a" style="left:2367px;top:1207px" width="22" height="22" viewBox="0 0 22 22"><circle cx="11" cy="11" r="10.5" fill="#4fa62c"/><text x="11" y="17" text-anchor="middle" font-family="Liberation Sans" font-weight="bold" font-size="16" fill="#fff">?</text></svg>
<div class="a" style="left:0;top:1249px;width:2396px;height:31px;background:#f0f0f0"></div>
<div class="a si" style="left:5px;top:1255px">用于评估目的的未授权副本，剩余9天</div>
<div class="a" style="left:1504px;top:1250px;width:1px;height:30px;background:#d0d0d0"></div>
<div class="a" style="left:1586px;top:1250px;width:1px;height:30px;background:#d0d0d0"></div>
<div class="a" style="left:1807px;top:1250px;width:1px;height:30px;background:#d0d0d0"></div>
<div class="a" style="left:2026px;top:1250px;width:1px;height:30px;background:#d0d0d0"></div>
<svg class="a" style="left:1518px;top:1256px" width="22" height="20" viewBox="0 0 22 20"><path d="M2 7 h18 M11 3 v16" stroke="#888" stroke-width="2.6"/></svg>
<svg class="a" style="left:1551px;top:1256px" width="20" height="20" viewBox="0 0 20 20"><rect x="2" y="2" width="2" height="17" fill="#e0a800"/><path d="M4 3 h14 v10 h-14z" fill="#f8c630"/></svg>
<div class="a" style="left:1601px;top:1256px;width:18px;height:18px;border-radius:50%;background:#7d7d7d"></div>
<div class="a si" style="left:1633px;top:1255px">0激活记录</div>
<svg class="a" style="left:1819px;top:1256px" width="24" height="20" viewBox="0 0 24 20"><path d="M4 13 A7 6 0 0 1 16 5" stroke="#1fa3dc" stroke-width="3" fill="none"/><path d="M14 1 L20 5 L14 9z" fill="#1fa3dc"/><path d="M20 7 A7 6 0 0 1 8 15" stroke="#1fa3dc" stroke-width="3" fill="none"/><path d="M10 11 L4 15 L10 19z" fill="#1fa3dc"/></svg>
<div class="a si" style="left:1853px;top:1255px">自动更新 5 s</div>
<div class="a si" style="left:2034px;top:1255px">V</div>
<div class="a" style="left:2043px;top:1238px;width:349px;height:39px;background:#fdfdfd;border-radius:7px;box-shadow:0 0 3px rgba(0,0,0,0.25)"></div>
<svg class="a" style="left:2053px;top:1243px" width="30" height="28" viewBox="0 0 30 28"><path d="M24 6 Q16 1 9 5 Q4 9 10 13 L20 16 Q25 19 19 22 Q12 24 5 20" stroke="#f0751e" stroke-width="5.5" fill="none" stroke-linecap="round"/></svg>
<div class="a" style="left:2093px;top:1243px;width:1px;height:30px;background:#ddd"></div>
<div class="a" style="left:2107px;top:1246px;font-size:22px;font-weight:bold;color:#111">中</div>
<svg class="a" style="left:2146px;top:1246px" width="18" height="22" viewBox="0 0 18 22"><circle cx="5" cy="6" r="3" stroke="#111" stroke-width="1.6" fill="none"/><circle cx="12" cy="14" r="2.2" fill="#111"/><path d="M13 15 L11 19" stroke="#111" stroke-width="1.6"/></svg>
<svg class="a" style="left:2183px;top:1245px" width="22" height="26" viewBox="0 0 22 26"><rect x="6" y="2" width="10" height="15" rx="5" stroke="#111" stroke-width="1.8" fill="none"/><path d="M3 12 A8 8 0 0 0 19 12 M11 20 v5" stroke="#111" stroke-width="1.8" fill="none"/></svg>
<svg class="a" style="left:2226px;top:1247px" width="24" height="22" viewBox="0 0 24 22"><rect x="1" y="1" width="22" height="20" rx="2" stroke="#111" stroke-width="1.8" fill="none"/><path d="M6 7 h2 M11 7 h2 M16 7 h2 M6 11 h2 M11 11 h2 M16 11 h2 M7 16 h10" stroke="#111" stroke-width="1.6"/></svg>
<svg class="a" style="left:2268px;top:1243px" width="30" height="30" viewBox="0 0 30 30"><defs><linearGradient id="sh" x1="0" y1="0" x2="1" y2="1"><stop offset="0" stop-color="#f06a5a"/><stop offset="1" stop-color="#7a7cf5"/></linearGradient></defs><path d="M3 9 L10 6 Q14 9 18 6 L25 9 L23 15 L20 14 L20 27 L8 27 L8 14 L5 15z" fill="url(#sh)"/><circle cx="23" cy="5" r="3.5" fill="#f04a3a"/></svg>
<svg class="a" style="left:2311px;top:1245px" width="26" height="26" viewBox="0 0 26 26"><g stroke="#111" stroke-width="1.8" fill="none"><rect x="2" y="2" width="8" height="8" rx="1"/><circle cx="19" cy="6" r="4.2"/><rect x="2" y="15" width="8" height="8" rx="1"/><rect x="15" y="15" width="8" height="8" rx="1"/></g></svg>
<svg class="a" style="left:2350px;top:1245px" width="34" height="26" viewBox="0 0 34 26"><path d="M4 14 L20 8 L26 12 L12 20z" fill="#e8642a"/><path d="M8 15 L20 11 L22 14 L12 18z" fill="#3a2010"/><circle cx="29" cy="8" r="3" fill="#d8f07a"/></svg>
</body></html>
